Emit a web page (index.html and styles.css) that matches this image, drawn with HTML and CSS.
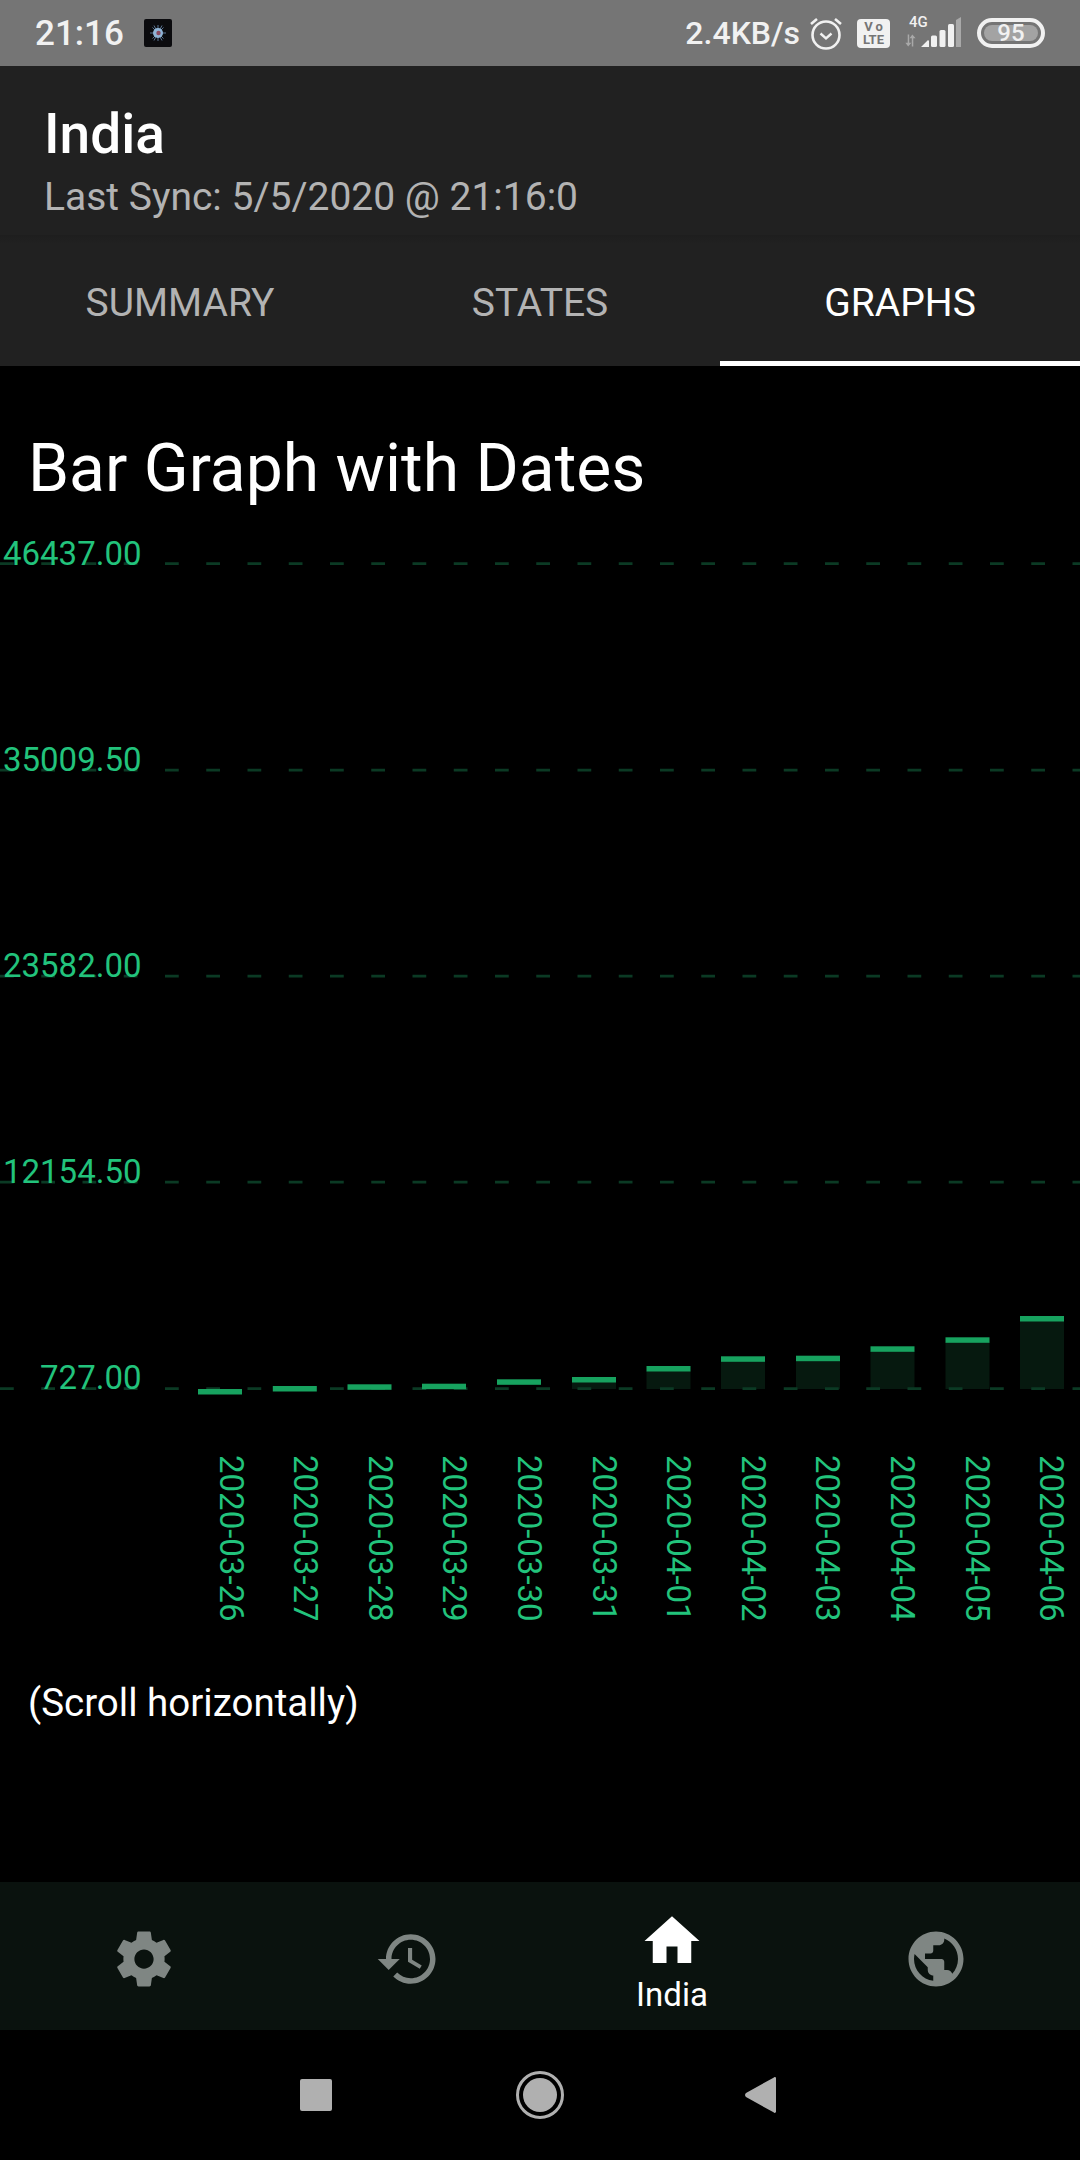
FILE: index.html
```html
<!DOCTYPE html>
<html>
<head>
	<title>India</title>
	<link rel="stylesheet" href="styles.css">
</head>
<body>
<div class="phone">

	<div class="statusbar">
		<div class="status-left">
			<span class="clock">21:16</span>
			<svg class="appicon" viewBox="0 0 28 28">
				<rect width="28" height="28" rx="2" fill="#0b0b0e"/>
				<g stroke="#6f8fb5" stroke-width=".8">
					<path d="M14 6v16M6 14h16M8.500 8.500l11 11M19.500 8.500l-11 11M10 6.500l8 15M18 6.500l-8 15"/>
				</g>
				<circle cx="14" cy="14" r="5" fill="#8fb4d6"/>
				<circle cx="14.500" cy="14" r="2.200" fill="#8a4a60"/>
			</svg>
		</div>
		<div class="status-right">
			<span class="speed">2.4KB/s</span>
			<svg class="alarm" viewBox="0 0 34 34" fill="none" stroke="#f1f1f1">
				<circle cx="17" cy="19" r="13.500" stroke-width="2.600"/>
				<path d="M11.500 17.500l5.500 5 5.500-5" stroke-width="2.400"/>
				<path d="M2 8l6-5M32 8l-6-5" stroke-width="2.600"/>
			</svg>
			<div class="volte"><span class="vo">Vo</span><span>LTE</span></div>
			<div class="signal">
				<span class="net">4G</span>
				<svg class="arrows" viewBox="0 0 14 13"><path d="M4 0h1.600v9L8 9 4.500 13 1.500 9H4zM9 0l3.500 4H10v9H8.400V4H6z" fill="#a9a9a9"/></svg>
				<svg class="bars" viewBox="0 0 40 30">
					<path d="M0 30l6.500-6.500c.6-.6 1.500-.2 1.500.6V30z" fill="#f1f1f1"/>
					<rect x="10" y="18.500" width="6" height="11.500" rx="1.500" fill="#f1f1f1"/>
					<rect x="18.500" y="13" width="6" height="17" rx="1.500" fill="#f1f1f1"/>
					<rect x="27" y="7" width="6" height="23" rx="1.500" fill="#f1f1f1"/>
					<path d="M35 3l5-3v30h-5z" fill="#a9a9a9"/>
				</svg>
			</div>
			<div class="battery"><span>95</span></div>
		</div>
	</div>

	<div class="appbar">
		<div class="country">India</div>
		<div class="sync">Last Sync: 5/5/2020 @ 21:16:0</div>
	</div>

	<div class="tabs">
		<div class="tab">SUMMARY</div>
		<div class="tab">STATES</div>
		<div class="tab active">GRAPHS</div>
	</div>

	<div class="content">
		<h1 class="graph-title">Bar Graph with Dates</h1>

		<svg class="chart" viewBox="0 0 1080 1140">
			<!-- chart top is page y 540 -->
			<g class="bars-fill">
				<rect x="572" y="842" width="44" height="7"/>
				<rect x="646.500" y="831" width="44" height="18"/>
				<rect x="721" y="821" width="44" height="28"/>
				<rect x="796" y="820" width="44" height="29"/>
				<rect x="870.500" y="811" width="44" height="38"/>
				<rect x="945.500" y="802" width="44" height="47"/>
				<rect x="1020" y="781" width="44" height="68"/>
			</g>
			<g class="grid">
				<line x1="0" x2="1080" y1="23.500" y2="23.500"/>
				<line x1="0" x2="1080" y1="230" y2="230"/>
				<line x1="0" x2="1080" y1="436" y2="436"/>
				<line x1="0" x2="1080" y1="642" y2="642"/>
				<line x1="0" x2="1080" y1="848.500" y2="848.500"/>
			</g>
			<g class="bars-top">
				<rect x="198" y="849" width="44" height="5.500"/>
				<rect x="272.800" y="846" width="44" height="5.500"/>
				<rect x="347.500" y="844.300" width="44" height="5.500"/>
				<rect x="422" y="843.700" width="44" height="5.500"/>
				<rect x="497" y="839.300" width="44" height="5.500"/>
				<rect x="572" y="837" width="44" height="5.500"/>
				<rect x="646.500" y="826" width="44" height="5.500"/>
				<rect x="721" y="816.300" width="44" height="5.500"/>
				<rect x="796" y="815.700" width="44" height="5.500"/>
				<rect x="870.500" y="806.300" width="44" height="5.500"/>
				<rect x="945.500" y="797.300" width="44" height="5.500"/>
				<rect x="1020" y="776" width="44" height="5.500"/>
			</g>
			<g class="axis-y">
				<text x="141.500" y="24.500">46437.00</text>
				<text x="141.500" y="230.500">35009.50</text>
				<text x="141.500" y="436.500">23582.00</text>
				<text x="141.500" y="642.500">12154.50</text>
				<text x="141.500" y="848.500">727.00</text>
			</g>
			<g class="axis-x">
				<text transform="translate(219.500 915) rotate(90)">2020-03-26</text>
				<text transform="translate(294.100 915) rotate(90)">2020-03-27</text>
				<text transform="translate(368.700 915) rotate(90)">2020-03-28</text>
				<text transform="translate(443.300 915) rotate(90)">2020-03-29</text>
				<text transform="translate(517.900 915) rotate(90)">2020-03-30</text>
				<text transform="translate(592.500 915) rotate(90)">2020-03-31</text>
				<text transform="translate(667.100 915) rotate(90)">2020-04-01</text>
				<text transform="translate(741.700 915) rotate(90)">2020-04-02</text>
				<text transform="translate(816.300 915) rotate(90)">2020-04-03</text>
				<text transform="translate(890.900 915) rotate(90)">2020-04-04</text>
				<text transform="translate(965.500 915) rotate(90)">2020-04-05</text>
				<text transform="translate(1040.100 915) rotate(90)">2020-04-06</text>
			</g>
		</svg>

		<p class="hint">(Scroll horizontally)</p>
	</div>

	<div class="bottomnav">
		<div class="navitem">
			<svg class="navicon" viewBox="0 0 24 24"><path d="M19.430 12.980c.04-.32.07-.64.07-.98s-.03-.66-.07-.98l2.110-1.650c.19-.15.24-.42.12-.64l-2-3.460c-.12-.22-.39-.3-.61-.22l-2.490 1c-.52-.4-1.080-.73-1.690-.98l-.38-2.650C14.460 2.180 14.250 2 14 2h-4c-.25 0-.46.18-.49.42l-.38 2.650c-.61.25-1.170.59-1.690.98l-2.490-1c-.23-.09-.49 0-.61.22l-2 3.460c-.13.22-.07.49.12.64l2.110 1.650c-.04.32-.07.65-.07.98s.03.66.07.98l-2.110 1.650c-.19.15-.24.42-.12.64l2 3.460c.12.22.39.3.61.22l2.490-1c.52.4 1.080.73 1.690.98l.38 2.650c.03.24.24.42.49.42h4c.25 0 .46-.18.49-.42l.38-2.650c.61-.25 1.170-.59 1.690-.98l2.490 1c.23.09.49 0 .61-.22l2-3.460c.12-.22.07-.49-.12-.64l-2.110-1.650zM12 15.500c-1.930 0-3.500-1.570-3.500-3.500s1.570-3.500 3.500-3.500 3.500 1.570 3.500 3.500-1.570 3.500-3.500 3.500z"/></svg>
		</div>
		<div class="navitem">
			<svg class="navicon" viewBox="0 0 24 24"><path d="M13 3c-4.970 0-9 4.030-9 9H1l3.890 3.890.07.14L9 12H6c0-3.870 3.130-7 7-7s7 3.130 7 7-3.130 7-7 7c-1.930 0-3.680-.79-4.940-2.060l-1.420 1.420C8.270 19.990 10.510 21 13 21c4.970 0 9-4.030 9-9s-4.030-9-9-9zm-1 5v5l4.280 2.540.72-1.210-3.500-2.080V8H12z"/></svg>
		</div>
		<div class="navitem active">
			<svg class="navicon" viewBox="0 0 24 24"><path d="M10 20v-6h4v6h5v-8h3L12 3 2 12h3v8z"/></svg>
			<span class="navlabel">India</span>
		</div>
		<div class="navitem">
			<svg class="navicon" viewBox="0 0 24 24"><path d="M12 2C6.480 2 2 6.480 2 12s4.480 10 10 10 10-4.480 10-10S17.520 2 12 2zm-1 17.930c-3.950-.49-7-3.850-7-7.930 0-.62.08-1.210.21-1.790L9 15v1c0 1.100.9 2 2 2v1.930zm6.900-2.540c-.26-.81-1-1.390-1.900-1.390h-1v-3c0-.55-.45-1-1-1H8v-2h2c.55 0 1-.45 1-1V7h2c1.100 0 2-.9 2-2v-.41c2.930 1.190 5 4.060 5 7.410 0 2.080-.8 3.970-2.100 5.390z"/></svg>
		</div>
	</div>

	<div class="sysnav">
		<div class="sys-square"></div>
		<div class="sys-circle"><div></div></div>
		<svg class="sys-back" viewBox="0 0 31 36"><path d="M31 1.500V34.500c0 1.500-1.500 2-2.500.8L1 20c-1.300-1-1.300-3 0-4L28.500.7c1-1 2.500-.7 2.500.8z"/></svg>
	</div>

</div>
</body>
</html>
```

FILE: styles.css
```css
*{box-sizing: border-box;margin: 0;padding: 0;}
body{background: #000;font-family: Roboto, "Liberation Sans", sans-serif;}

.phone{width: 1080px;height: 2160px;display: flex;flex-direction: column;overflow: hidden;background: #000;color: #fff;}

/* status bar */
.statusbar{height: 66px;background: #757575;display: flex;justify-content: space-between;align-items: center;color: #f1f1f1;font-weight: 500;}
.status-left{display: flex;align-items: center;padding-left: 35px;}
.clock{font-size: 35px;width: 109px;}
.appicon{width: 28px;height: 28px;display: block;}
.status-right{display: flex;align-items: center;padding-right: 35px;}
.speed{font-size: 32px;margin-right: 9px;}
.alarm{width: 34px;height: 34px;display: block;}
.volte{width: 33px;height: 29px;margin-left: 14px;background: #f1f1f1;border-radius: 4px;color: #757575;font-size: 13px;font-weight: 700;line-height: 13px;display: flex;flex-direction: column;align-items: center;justify-content: center;}
.vo{letter-spacing: 3px;margin-right: -3px;}
.signal{width: 58px;height: 34px;margin-left: 13px;position: relative;}
.net{position: absolute;left: 6px;top: -1px;font-size: 15px;line-height: 14px;}
.arrows{position: absolute;left: 1px;bottom: 3px;width: 13px;height: 13px;}
.bars{position: absolute;left: 18px;bottom: 3px;width: 40px;height: 30px;}
.battery{width: 68px;height: 30px;margin-left: 16px;border: 4px solid #f1f1f1;border-radius: 15px;padding: 3px;}
.battery span{display: block;height: 16px;background: #a3a3a3;border-radius: 8px;font-size: 24px;line-height: 16px;text-align: center;}

/* app bar */
.appbar{height: 169px;background: #212121;padding: 36px 44px 0;}
.country{font-size: 55px;font-weight: 500;line-height: 64px;}
.sync{font-size: 39px;line-height: 46px;color: #b3b3b3;margin-top: 8px;}

.tabs{height: 131px;background: linear-gradient(#1e1e1e, #212121 9px);display: flex;}
.tab{flex: 1;display: flex;align-items: center;justify-content: center;font-size: 39px;color: #b3b3b3;padding-top: 10px;border-bottom: 5px solid transparent;}
.tab.active{color: #fff;border-bottom-color: #fff;}

/* graph */
.content{flex: 1;min-height: 0;}
.graph-title{font-size: 66px;font-weight: 400;line-height: 78px;padding: 64px 0 0 28px;height: 174px;}
.chart{width: 1080px;height: 1140px;display: block;}
.hint{font-size: 38.500px;line-height: 46px;padding-left: 28px;}

.grid line{stroke: #0b3a24;stroke-width: 2.750;stroke-dasharray: 13.750 27.500;}
.bars-fill rect{fill: #06190f;}
.bars-top rect{fill: #17a25f;}
.axis-y text{fill: #22c37c;font-size: 33px;text-anchor: end;}
.axis-x text{fill: #22c37c;font-size: 33px;}

/* bottom nav */
.bottomnav{height: 148px;background: #0a120e;display: flex;padding: 0 12px;}
.navitem{flex: 1;display: flex;flex-direction: column;align-items: center;justify-content: center;padding-top: 6px;}
.navicon{width: 66px;height: 66px;display: block;fill: #7f8683;}
.navitem.active{justify-content: flex-start;padding-top: 26px;}
.navitem.active .navicon{fill: #fff;}
.navlabel{font-size: 33px;line-height: 40px;color: #fff;margin-top: 1px;}

/* android buttons */
.sysnav{height: 130px;display: flex;align-items: center;justify-content: center;gap: 184px;padding-right: 4px;}
.sys-square{width: 32px;height: 32px;background: #b0b0b0;border-radius: 2px;}
.sys-circle{width: 48px;height: 48px;border: 3px solid #b0b0b0;border-radius: 50%;padding: 4px;}
.sys-circle div{width: 100%;height: 100%;background: #b0b0b0;border-radius: 50%;}
.sys-back{width: 31px;height: 36px;display: block;fill: #b0b0b0;margin-left: -3px;}
```
